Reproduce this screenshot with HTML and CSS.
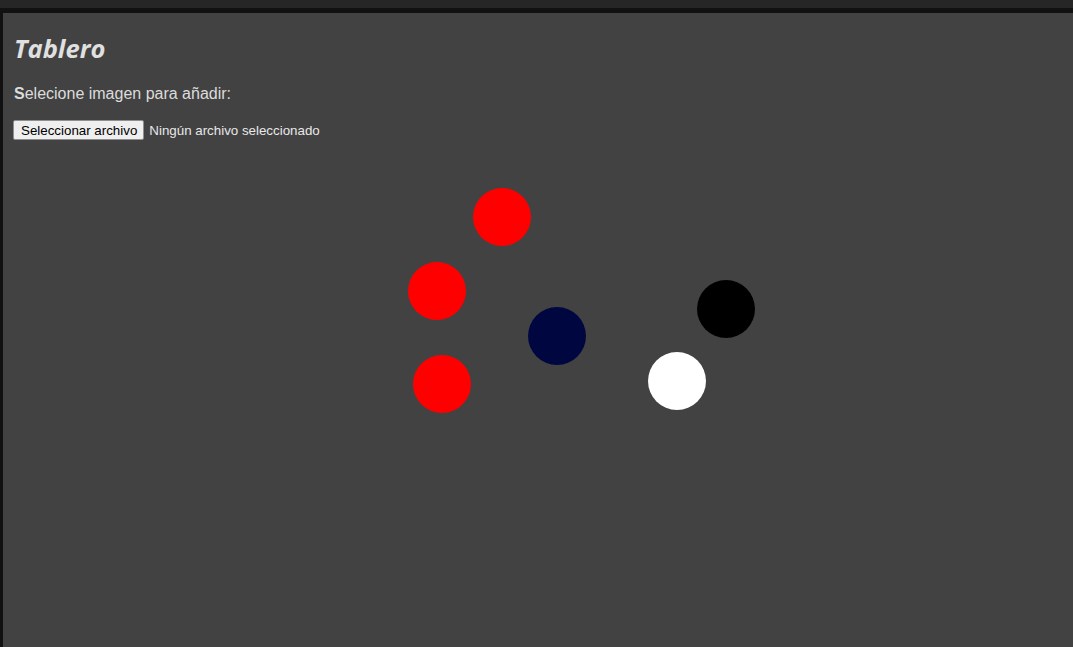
FILE: index.html
```html
<!DOCTYPE html>
<html lang="es">
<head>
<meta charset="utf-8">
<title>Tablero</title>
<link rel="stylesheet" href="styles.css">
</head>
<body>
<div class="topbar"></div>
<main class="panel">
  <h1 class="title">Tablero</h1>
  <p class="prompt"><b>S</b>elecione imagen para añadir:</p>
  <div class="file-row">
    <button class="file-btn" type="button">Seleccionar archivo</button>
    <span class="file-name">Ningún archivo seleccionado</span>
  </div>
  <div class="chip red" style="left:470px;top:175px"></div>
  <div class="chip red" style="left:405px;top:249px"></div>
  <div class="chip navy" style="left:525px;top:294px"></div>
  <div class="chip red" style="left:410px;top:342px"></div>
  <div class="chip black" style="left:694px;top:267px"></div>
  <div class="chip white" style="left:645px;top:339px"></div>
</main>
</body>
</html>
```
FILE: styles.css
```css
html, body {
  margin: 0;
  padding: 0;
  height: 100%;
  background: #262626;
  overflow: hidden;
}
body {
  display: flex;
  flex-direction: column;
}
.topbar {
  height: 8px;
  background: #262626;
  flex: none;
}
.panel {
  position: relative;
  flex: 1;
  background: #424242;
  border-top: 5px solid #111111;
  border-left: 3px solid #111111;
  padding: 20px 10px 0 10px;
  display: flex;
  flex-direction: column;
  align-items: flex-start;
  color: #dcdcdc;
}
.title {
  margin: 0 0 0 1px;
  font-family: "Open Sans", Lato, sans-serif;
  font-weight: 700;
  font-style: italic;
  font-size: 25.5px;
  line-height: 30px;
  color: #e0e0e0;
}
.prompt {
  margin: 22px 0 0 1px;
  font-family: "Liberation Sans", Arial, sans-serif;
  font-size: 16px;
  line-height: 18px;
  color: #dcdcdc;
}
.prompt b {
  font-weight: 700;
}
.file-row {
  margin-top: 17px;
  display: flex;
  align-items: center;
  gap: 5px;
  font-family: "Liberation Sans", Arial, sans-serif;
  font-size: 13.333px;
}
.file-btn {
  height: 20px;
  padding: 1px 6px 0 7px;
  margin: 0;
  font-family: "Liberation Sans", Arial, sans-serif;
  font-size: 13.333px;
  line-height: 16px;
  color: #000;
  background: #efefef;
  border: 1px solid #8f8f8f;
  border-radius: 2px;
}
.file-name {
  color: #e8e8e8;
  line-height: 16px;
  padding-top: 2px;
}
.chip {
  position: absolute;
  width: 58px;
  height: 58px;
  border-radius: 50%;
}
.red { background: #ff0000; }
.navy { background: #000640; }
.black { background: #000000; }
.white { background: #ffffff; }
```
